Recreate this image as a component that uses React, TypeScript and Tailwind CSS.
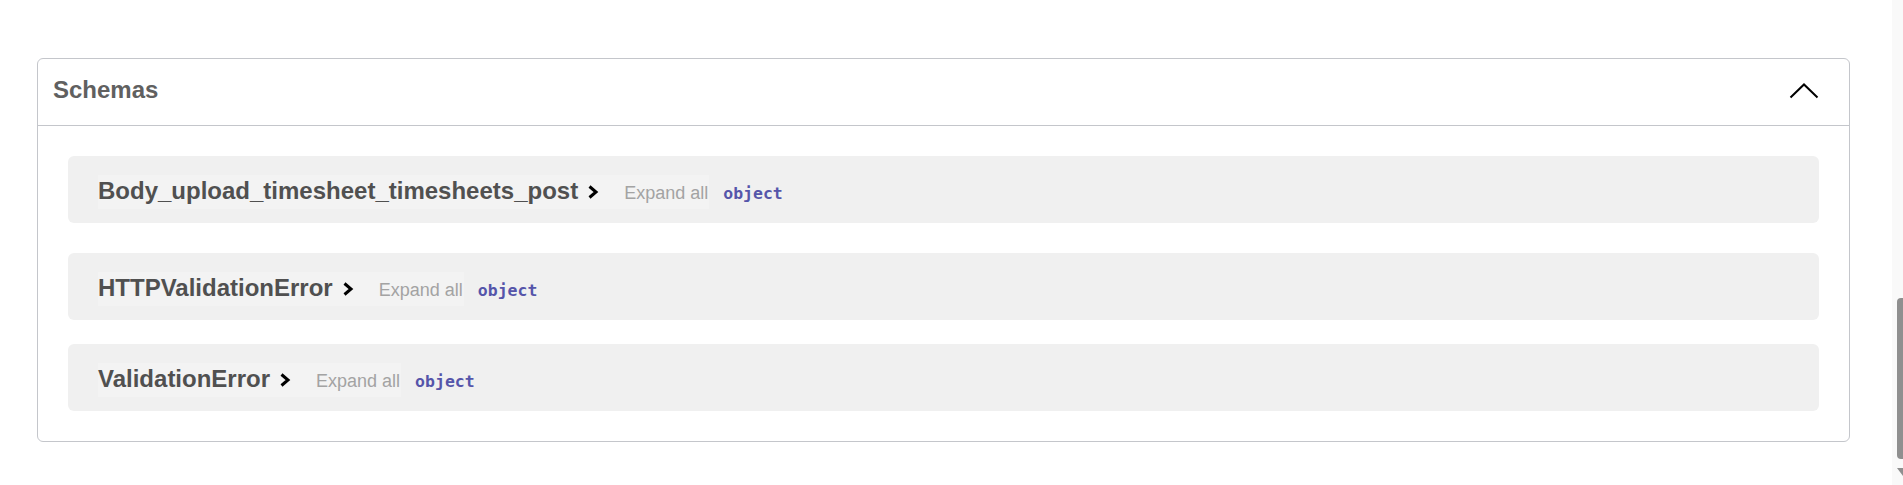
const schemas = [
  { name: 'Body_upload_timesheet_timesheets_post', gap: 'mb-[30px]' },
  { name: 'HTTPValidationError', gap: 'mb-[23.5px]' },
  { name: 'ValidationError', gap: '' },
];

const ChevronRight = () => (
  <svg width="12" height="14" viewBox="0 0 12 14" className="ml-[9px] shrink-0">
    <path d="M2.5 1.5 L9 7 L2.5 12.5" fill="none" stroke="#000" strokeWidth="3" />
  </svg>
);

const SchemaRow = ({ name, gap }: { name: string; gap: string }) => (
  <div className={`mx-[30px] h-[67px] rounded-[6px] bg-[#f0f0f0] flex items-center pl-[30px] pt-[5px] ${gap}`}>
    <div className="flex items-baseline">
      <div className="flex items-baseline bg-[#f3f3f3] pr-[1px]">
        <span className="text-[24px] leading-[31px] font-bold text-[#505050]">{name}</span>
        <ChevronRight />
        <span className="ml-[25px] text-[18px] leading-[31px] text-[#a3a3a3]">Expand all</span>
      </div>
      <span className="ml-[14px] text-[16.5px] font-bold text-[#55a] font-['DejaVu_Sans_Mono',monospace]">
        object
      </span>
    </div>
  </div>
);

export default function App() {
  return (
    <div className="flex h-[485px] w-full bg-white font-['Liberation_Sans',Arial,sans-serif]">
      <main className="flex-1 pl-[37px] pr-[42px] pt-[58px]">
        <section className="rounded-[6px] border border-[#c4c6cb]">
          <div className="flex items-center justify-between border-b border-[#c4c6cb] pl-[15px] pr-[30px] pt-[13px] pb-[17px]">
            <h4 className="text-[24px] leading-[36px] font-bold text-[#606060]">Schemas</h4>
            <svg width="30" height="16" viewBox="0 0 30 16" className="mt-[2px]">
              <polyline points="1.5,14.5 15,1.5 28.5,14.5" fill="none" stroke="#000" strokeWidth="2" />
            </svg>
          </div>
          <div className="pt-[30px] pb-[30px]">
            {schemas.map((s) => (
              <SchemaRow key={s.name} name={s.name} gap={s.gap} />
            ))}
          </div>
        </section>
      </main>
      <div className="w-[11px] bg-[#f9f9f9] flex flex-col items-end">
        <div className="mt-[298px] h-[161px] w-[6px] rounded-l-[4px] bg-[#8f8f8f]" />
        <svg width="6" height="8" viewBox="0 0 6 8" className="mt-[9px]">
          <polygon points="0,0 6,0 6,8" fill="#8f8f8f" />
        </svg>
      </div>
    </div>
  );
}
